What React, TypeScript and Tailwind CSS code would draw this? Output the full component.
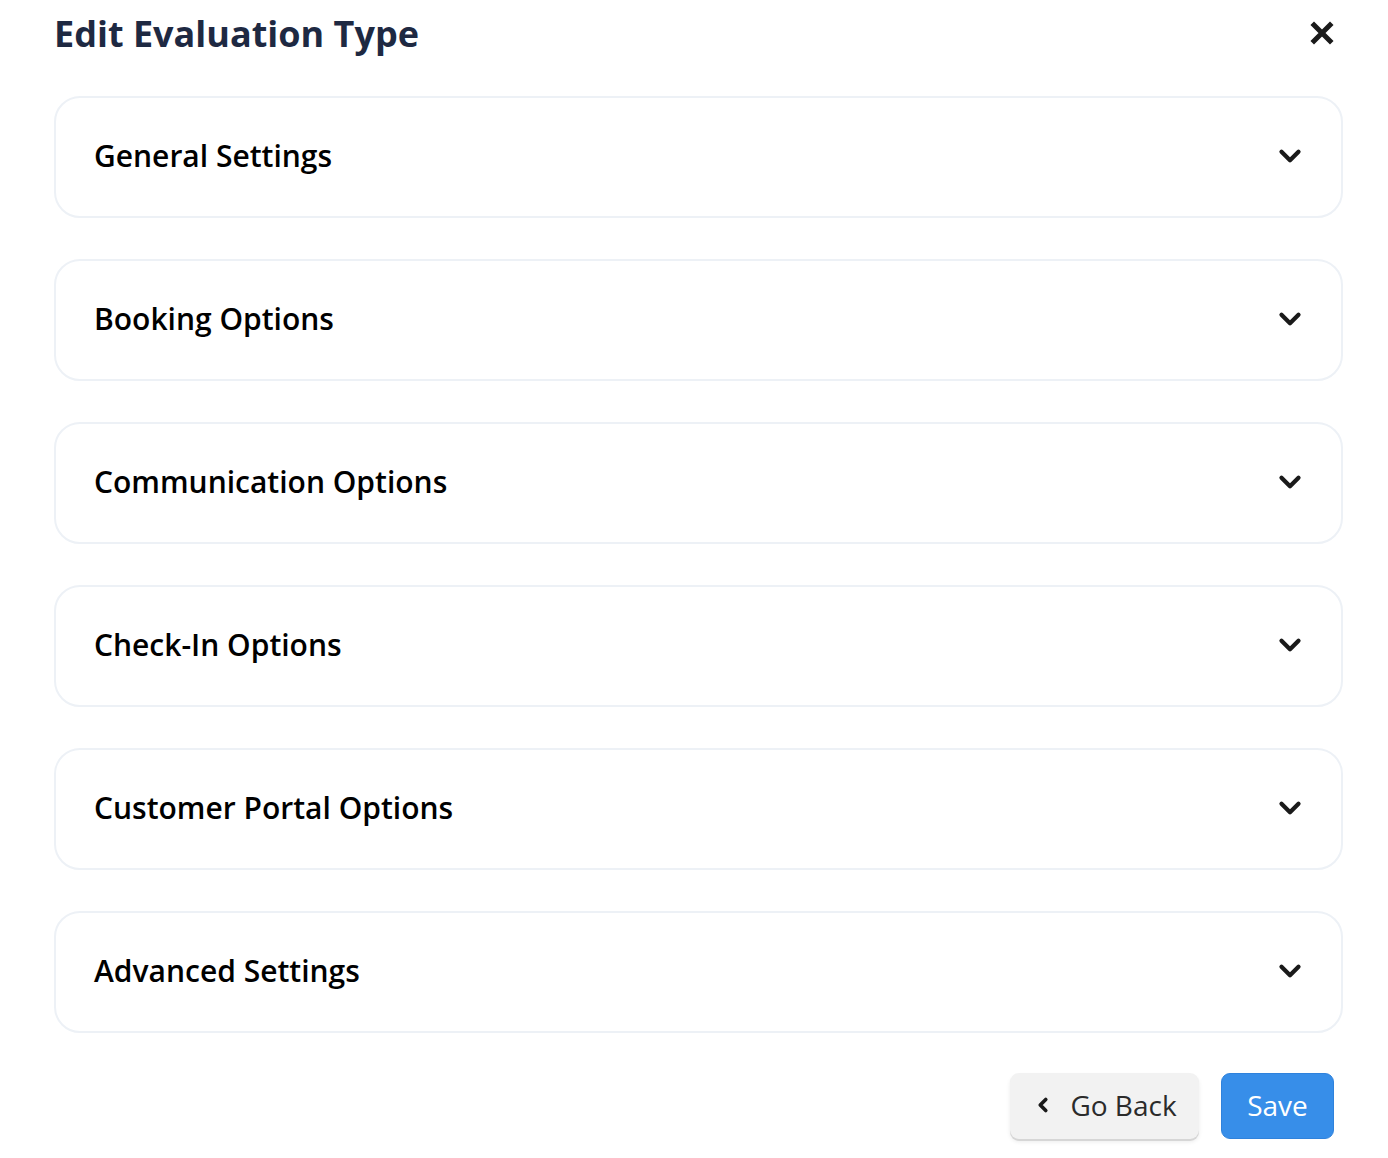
import { ChevronDown, ChevronLeft } from 'lucide-react'

const sections = [
  'General Settings',
  'Booking Options',
  'Communication Options',
  'Check-In Options',
  'Customer Portal Options',
  'Advanced Settings',
]

export default function App() {
  return (
    <main
      className="min-h-screen bg-white pl-[54px] pr-[45px]"
      style={{ fontFamily: '"Open Sans", sans-serif' }}
    >
      {/* Header */}
      <div className="flex h-[68px] items-center justify-between">
        <h1 className="text-[36px] font-bold leading-none text-[#1e2942]">
          Edit Evaluation Type
        </h1>
        <button className="mr-[9px] mb-[2px] text-[#1a1a1a]">
          <svg width="24" height="24" viewBox="0 0 24 24">
            <path d="M4 4 L20 20 M20 4 L4 20" stroke="currentColor" strokeWidth="5" strokeLinecap="square" />
          </svg>
        </button>
      </div>

      {/* Sections */}
      <div className="mt-[28px] flex flex-col gap-[41px]">
        {sections.map((title) => (
          <div
            key={title}
            className="flex h-[122px] items-center justify-between rounded-[26px] border-2 border-[#edf1f6] pl-[38px] pr-[34px]"
          >
            <span className="pb-[3px] text-[30px] font-semibold text-black">{title}</span>
            <ChevronDown size={34} strokeWidth={3} className="mb-[3px] text-[#1a1a1a]" />
          </div>
        ))}
      </div>

      {/* Footer buttons */}
      <div className="mt-[40px] flex justify-end gap-[22px] pr-[9px]">
        <button className="flex h-[66px] w-[189px] items-center justify-center gap-[16px] rounded-[9px] bg-[#f2f2f2] pb-[2px] text-[28px] text-[#2b2b2b] shadow-[0_2px_0_#d6d6d6,0_3px_4px_rgba(0,0,0,0.08)]">
          <ChevronLeft size={22} strokeWidth={4} className="text-[#1a1a1a]" />
          Go Back
        </button>
        <button className="h-[66px] w-[113px] rounded-[9px] border border-[#2f82dc] bg-[#378ee9] pb-[2px] text-[28px] text-white">
          Save
        </button>
      </div>
    </main>
  )
}
